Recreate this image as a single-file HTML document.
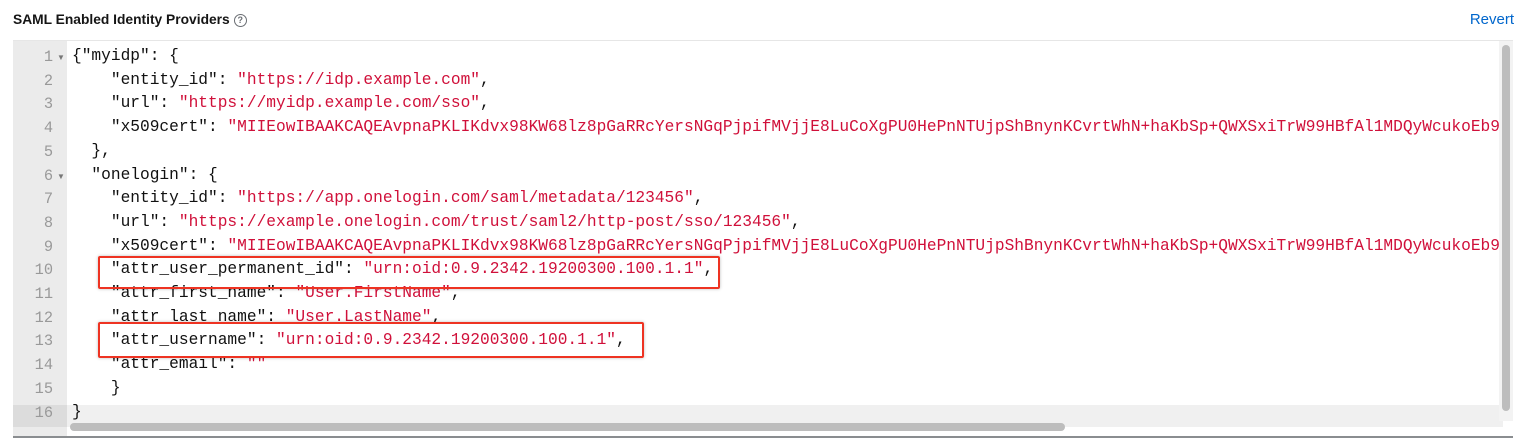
<!DOCTYPE html>
<html><head><style>
body{margin:0;width:1527px;height:448px;background:#fff;overflow:hidden;position:relative;font-family:"Liberation Sans",sans-serif}
.title{position:absolute;left:13px;top:12px;font-size:13.8px;font-weight:bold;color:#151515}
.q{display:inline-block;width:11px;height:11px;border:1.3px solid #6a6e73;border-radius:50%;font-size:9px;line-height:11px;text-align:center;color:#6a6e73;margin-left:4px;vertical-align:1px;font-weight:bold}
.revert{position:absolute;right:13px;top:11px;font-size:15px;color:#0066cc}
.ed{position:absolute;left:13px;top:40px;width:1500px;height:395px;border-top:1px solid #e6e6e6;border-bottom:2px solid #8a8d90;overflow:hidden}
.gut{position:absolute;left:0;top:0;width:54px;height:395px;background:#ebebeb}
.ln{position:absolute;left:0;width:40px;text-align:right;color:#999;font-family:"Liberation Mono",monospace;font-size:15.3px}
.fold{position:absolute;left:44px;font-size:8px;color:#777}
.code{position:absolute;left:59px;font-family:"Liberation Mono",monospace;font-size:16.2px;color:#111;white-space:pre}
.s{color:#d0103a}
.act{position:absolute;left:0;top:364px;width:1490px;height:22px;background:#f0f0f0}
.actg{position:absolute;left:0;top:364px;width:54px;height:22px;background:#dcdcdc}
.box{position:absolute;border:2.5px solid #ee3322;border-radius:2px;box-shadow:0 0 3px rgba(0,0,0,.25)}
</style></head><body>
<div class="title">SAML Enabled Identity Providers<span class="q">?</span></div>
<div class="revert">Revert</div>
<div class="ed">
<div class="gut"></div>
<div class="act"></div><div class="actg"></div>
<div id="c"></div>
<div style="position:absolute;left:1486px;top:0;width:14px;height:380px;background:#f3f3f3"></div>
<div style="position:absolute;left:1489px;top:4px;width:8px;height:366px;background:#bdbdbd;border-radius:4px"></div>
<div style="position:absolute;left:57px;top:382px;width:995px;height:8px;background:#bdbdbd;border-radius:4px"></div>
</div>
<div class="box" style="left:98px;top:256px;width:618px;height:29px"></div>
<div class="box" style="left:98px;top:322px;width:542px;height:32px"></div>
<script>
var L=[
'{"myidp": {',
'    "entity_id": <s>"https://idp.example.com"</s>,',
'    "url": <s>"https://myidp.example.com/sso"</s>,',
'    "x509cert": <s>"MIIEowIBAAKCAQEAvpnaPKLIKdvx98KW68lz8pGaRRcYersNGqPjpifMVjjE8LuCoXgPU0HePnNTUjpShBnynKCvrtWhN+haKbSp+QWXSxiTrW99HBfAl1MDQyWcukoEb9Cw6INctVUN4iRvkn9T8E6q174RbcnwA</s>',
'  },',
'  "onelogin": {',
'    "entity_id": <s>"https://app.onelogin.com/saml/metadata/123456"</s>,',
'    "url": <s>"https://example.onelogin.com/trust/saml2/http-post/sso/123456"</s>,',
'    "x509cert": <s>"MIIEowIBAAKCAQEAvpnaPKLIKdvx98KW68lz8pGaRRcYersNGqPjpifMVjjE8LuCoXgPU0HePnNTUjpShBnynKCvrtWhN+haKbSp+QWXSxiTrW99HBfAl1MDQyWcukoEb9Cw6INctVUN4iRvkn9T8E6q174RbcnwA</s>',
'    "attr_user_permanent_id": <s>"urn:oid:0.9.2342.19200300.100.1.1"</s>,',
'    "attr_first_name": <s>"User.FirstName"</s>,',
'    "attr_last_name": <s>"User.LastName"</s>,',
'    "attr_username": <s>"urn:oid:0.9.2342.19200300.100.1.1"</s>,',
'    "attr_email": <s>""</s>',
'    }',
'}'];
var h='';
for(var i=0;i<L.length;i++){var t=7+i*23.7;
h+='<div class="ln" style="top:'+t+'px">'+(i+1)+'</div><div class="code" style="top:'+(t-1)+'px">'+L[i].replace(/<s>/g,'<span class="s">').replace(/<\/s>/g,'</span>')+'</div>';
if(i==0||i==5)h+='<div class="fold" style="top:'+(t+5)+'px">&#9660;</div>';}
document.getElementById('c').innerHTML=h;
</script>
</body></html>
